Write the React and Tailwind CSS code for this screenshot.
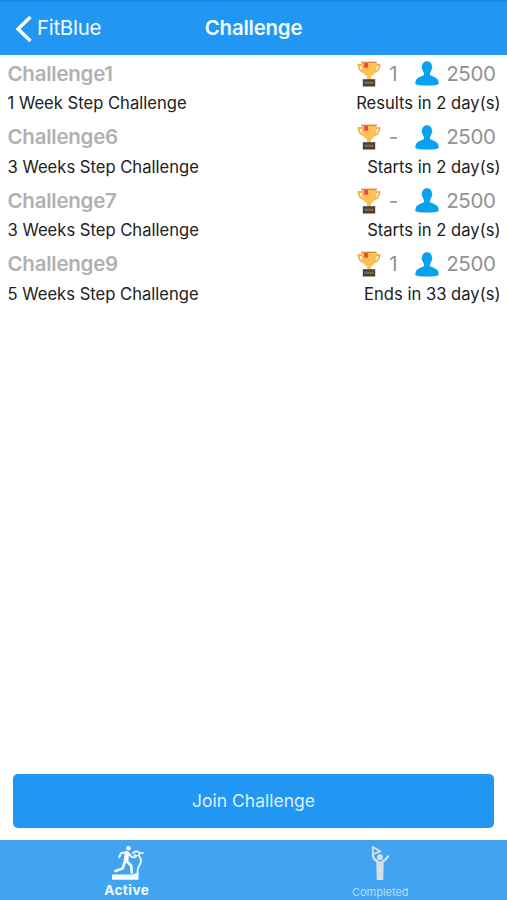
const challenges = [
  { name: 'Challenge1', rank: '1', members: 2500, detail: '1 Week Step Challenge', status: 'Results in 2 day(s)' },
  { name: 'Challenge6', rank: '-', members: 2500, detail: '3 Weeks Step Challenge', status: 'Starts in 2 day(s)' },
  { name: 'Challenge7', rank: '-', members: 2500, detail: '3 Weeks Step Challenge', status: 'Starts in 2 day(s)' },
  { name: 'Challenge9', rank: '1', members: 2500, detail: '5 Weeks Step Challenge', status: 'Ends in 33 day(s)' }
]

const TrophyIcon = () => (
  <svg className="w-[24px] h-[26px] shrink-0" viewBox="0 0 24 26" fill="none">
    <path d="M6 4H1.500c.2 4.500 2.200 7 6.500 7.700M18 4h4.500c-.2 4.500-2.200 7-6.500 7.700" stroke="#f0b052" strokeWidth="1.800" />
    <path d="M4.300 1.200h15.400c.2 7.300-1 11.300-4.700 13.500-1 .7-1.300 1.600-1 4h-4c.3-2.400 0-3.300-1-4C5.300 12.500 4.100 8.500 4.300 1.200z" fill="#fcc152" />
    <path d="M4.300.6h15.400v1.400H4.300z" fill="#d0913f" />
    <path d="M7 2h4.200v4.700H7z" fill="#e2533b" />
    <path d="M5.800 18.200h12.400v7.300H5.800z" fill="#443f3b" />
    <path d="M7.300 20.600h9.400v2.300H7.300z" fill="#84693f" />
  </svg>
)

const PersonIcon = () => (
  <svg className="w-[24px] h-[25px] shrink-0" viewBox="0 0 24 25" fill="#08a0f0">
    <path d="M12 .2c3 0 4.900 2.100 4.900 5.200 0 .6.600.7.500 1.600-.1 1-.7 1.200-.9 1.800-.3 1.400-.9 2.300-1.500 3v2.100c1.300 1.200 5.900 2.100 7.500 4.400.8 1.200 1.100 2.900 1.200 4.600-1.600 1.200-5.700 1.700-11.700 1.700S1.900 24.100.3 22.900c.1-1.700.4-3.400 1.200-4.600 1.600-2.300 6.200-3.200 7.500-4.400v-2.100c-.6-.7-1.200-1.600-1.500-3-.2-.6-.8-.8-.9-1.800-.1-.9.5-1 .5-1.600C7.100 2.300 9 .2 12 .2z" />
  </svg>
)

const TreadmillIcon = () => (
  <svg className="w-[34px] h-[36px]" viewBox="0 0 34 36" fill="none" stroke="#f4fbff" strokeLinecap="round" strokeLinejoin="round">
    <circle cx="18.500" cy="3.200" r="2.300" fill="#f4fbff" stroke="none" />
    <path d="M17 8.200l-1 7" strokeWidth="4.600" />
    <path d="M16 7.200L11 8.200 9.200 12.300M19 8.500l2.500 3.500 3.500.3" strokeWidth="2" />
    <path d="M15.200 16l-2.700 7.500-7 2.500M16.800 16l4.400 4.800.6 6.700" strokeWidth="2.700" />
    <path d="M23 8.300C24.500 6 28 5.800 29.500 8l3.500-.2M29.500 9.500c-1.500 1.700-3.500 1.500-5 .5M29.500 11.500c2 3 1.800 6.500-.5 9.500-1.200 1.700-1.500 4-1.500 8" strokeWidth="1.700" />
    <path d="M2 29.500h20l6.500-2v7.300H2z" fill="#f4fbff" stroke="none" />
  </svg>
)

const WinnerIcon = () => (
  <svg className="w-[20px] h-[36px]" viewBox="0 0 20 36" fill="none" stroke="#d5dfe8" strokeLinecap="round" strokeLinejoin="round">
    <path d="M2.800 2v8.500M2.800 2l7.500 4.300-6.500 2.500" strokeWidth="1.900" />
    <circle cx="10" cy="12.300" r="3" fill="#d5dfe8" stroke="none" />
    <path d="M2.800 10.500l1.500 3.500 4.200 3.300M18 11.500l-3 3.500-3.500 2.500" strokeWidth="2.400" />
    <path d="M6.300 15.800l3.700 1 3.700-1-.4 19.200H6.700z" fill="#d5dfe8" stroke="none" />
  </svg>
)

const ChallengeRow = ({ challenge }) => (
  <li className="h-[63.500px] pl-[7.500px] pr-[6.500px]">
    <div className="flex items-center justify-between h-[37px]">
      <span className="text-[20.500px] font-semibold text-[#b1b1b1] tracking-[-0.250px]">{challenge.name}</span>
      <div className="flex items-center pr-[5px] text-[20.500px] text-[#929292]">
        <TrophyIcon />
        <span className="w-[34px] text-center pr-[9px] pl-[1px]">{challenge.rank}</span>
        <PersonIcon />
        <span className="w-[50px] ml-[7px] text-right tracking-[-0.400px] whitespace-nowrap">{challenge.members}</span>
      </div>
    </div>
    <div className="flex items-center justify-between h-[23px] text-[16.600px] text-[#222]">
      <span>{challenge.detail}</span>
      <span>{challenge.status}</span>
    </div>
  </li>
)

const App = () => {
  return (
    <div className="flex flex-col w-full h-[900px] bg-white font-['Inter',sans-serif] overflow-hidden">
      {/* Navigation bar */}
      <header className="grid grid-cols-3 items-center h-[55px] shrink-0 bg-[#2196f3] border-t-2 border-[#2389df] text-[#f0f9ff]">
        <button className="flex items-center pl-[15px] text-[20.500px]">
          <svg className="w-[18px] h-[28px] mr-[4px]" viewBox="0 0 18 28" fill="none" stroke="white" strokeWidth="3.400">
            <path d="M15.500 2L3 14l12.500 12" />
          </svg>
          <span className="tracking-[-0.300px]">FitBlue</span>
        </button>
        <h1 className="text-center text-[20.500px] font-semibold tracking-[-0.250px]">Challenge</h1>
      </header>

      <ul className="flex-1 pt-[0.400px]">
        {challenges.map((challenge) => (
          <ChallengeRow key={challenge.name} challenge={challenge} />
        ))}
      </ul>

      <button className="h-[54px] mx-[13px] mb-[12px] pt-[1px] shrink-0 rounded-[5px] bg-[#2196f3] text-[17.500px] text-[#dcf0ff]">
        Join Challenge
      </button>

      {/* Tab bar */}
      <nav className="grid grid-cols-2 h-[60px] shrink-0 bg-[#41a4f3] border-t border-[#4c9edf]">
        <button className="flex flex-col items-center pt-[4px]">
          <TreadmillIcon />
          <span className="mt-[1px] text-[13.500px] leading-[16px] font-bold tracking-[0.500px] text-[#f4fbff]">Active</span>
        </button>
        <button className="flex flex-col items-center pt-[4px]">
          <WinnerIcon />
          <span className="mt-[3px] text-[11px] leading-[16px] text-[#b9dcf8]">Completed</span>
        </button>
      </nav>
    </div>
  )
}

export default App
